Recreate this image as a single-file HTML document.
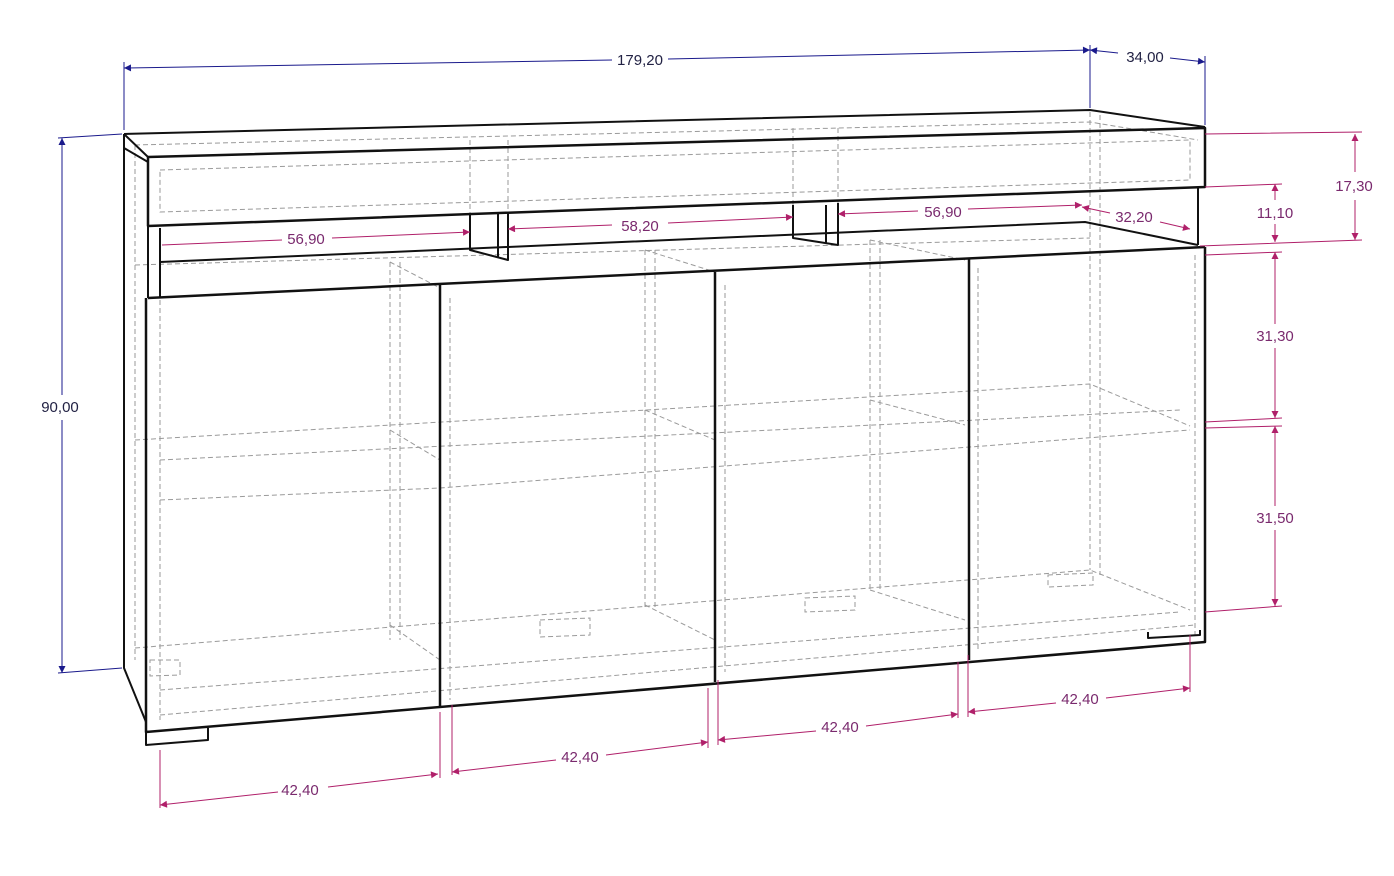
<!DOCTYPE html>
<html><head><meta charset="utf-8"><style>
html,body{margin:0;padding:0;background:#fff;}
svg{display:block}
text{font-family:"Liberation Sans",sans-serif;font-size:15px;}
.m{fill:#7a2a6e}.b{fill:#222244}
</style></head><body>
<svg width="1394" height="876" viewBox="0 0 1394 876" xmlns="http://www.w3.org/2000/svg">
<defs>
<marker id="am" viewBox="0 0 10 10" refX="10" refY="5" markerWidth="9" markerHeight="7" orient="auto-start-reverse" markerUnits="userSpaceOnUse"><path d="M0,0L10,5L0,10z" fill="#b0206a"/></marker>
<marker id="ab" viewBox="0 0 10 10" refX="10" refY="5" markerWidth="9" markerHeight="7" orient="auto-start-reverse" markerUnits="userSpaceOnUse"><path d="M0,0L10,5L0,10z" fill="#1a1a8c"/></marker>
</defs>
<g stroke="#9a9a9a" stroke-width="1" stroke-dasharray="5,3" fill="none">
<path d="M135,145 L1090,122 L1198,140"/>
<path d="M160,170 L1190,140 L1190,180 L160,212z"/>
<path d="M135,265 L1090,238"/>
<path d="M135,440 L1090,384 L1190,426"/>
<path d="M160,500 L440,488 L1190,430"/>
<path d="M160,460 L1180,410"/>
<path d="M135,648 L1090,570 L1190,610"/>
<path d="M160,715 L1195,625"/>
<path d="M160,690 L1180,612"/>
<path d="M135,145 L135,660 M160,300 L160,720"/>
<path d="M1090,112 L1090,570 M1100,115 L1100,575"/>
<path d="M390,262 L390,640 M400,262 L400,640 M390,262 L440,288"/>
<path d="M645,250 L645,610 M655,250 L655,610 M645,250 L715,272"/>
<path d="M870,240 L870,590 M880,240 L880,590 M870,240 L965,260"/>
<path d="M390,430 L440,460 M645,410 L715,440 M870,400 L965,425"/>
<path d="M390,625 L440,660 M645,605 L715,640 M870,590 L965,620"/>
<path d="M470,140 L470,215 M508,140 L508,215 M793,128 L793,205 M838,128 L838,205"/>
<path d="M450,298 L450,700 M725,285 L725,672 M978,268 L978,650 M1195,255 L1195,635"/>
<path d="M540,620 L590,618 L590,635 L540,637z M805,598 L855,596 L855,610 L805,612z M1048,575 L1093,573 L1093,585 L1048,587z M150,660 L180,660 L180,675 L150,676z"/>
</g>
<g stroke="#111" stroke-width="2" fill="none" stroke-linejoin="round">
<path d="M124,134 L1090,110 L1205,127"/>
<path d="M148,157 L1205,128 L1205,187 L148,226z" stroke-width="2.5"/>
<path d="M124,134 L148,157 M124,148 L148,162"/>
<path d="M124,134 L124,668 L146,722"/>
<path d="M148,226 L148,298 M160,228 L160,298"/>
<path d="M160,262 L1085,222 L1198,245"/>
<path d="M1198,187 L1198,245"/>
<path d="M470,215 L470,250 L508,260 L508,212 M498,258 L498,214"/>
<path d="M793,205 L793,238 L838,245 L838,203 M826,244 L826,205"/>
<path d="M148,298 L1205,247" stroke-width="2.5"/>
<path d="M146,298 L146,732 L1205,642 L1205,247" stroke-width="2.5"/>
<path d="M440,285 L440,707 M715,272 L715,682 M969,259 L969,660" stroke-width="2.5"/>
<path d="M146,732 L146,745 L208,740 L208,728 M1148,632 L1148,638 L1200,635 L1200,630"/>
<path d="M124,648 L124,668"/>
</g>
<g stroke="#1a1a8c" stroke-width="1" fill="none">
<path d="M124,62 L124,130 M1090,45 L1090,108 M1205,56 L1205,125"/>
<path d="M124,68 L612,60" marker-start="url(#ab)"/>
<path d="M668,59 L1090,50" marker-end="url(#ab)"/>
<path d="M1090,50 L1118,53" marker-start="url(#ab)"/>
<path d="M1170,58 L1205,62" marker-end="url(#ab)"/>
<path d="M58,138 L122,134 M58,673 L122,668"/>
<path d="M62,138 L62,395" marker-start="url(#ab)"/>
<path d="M62,420 L62,673" marker-end="url(#ab)"/>
</g>
<text x="640" y="65" text-anchor="middle" class="b">179,20</text>
<text x="1145" y="62" text-anchor="middle" class="b">34,00</text>
<text x="60" y="412" text-anchor="middle" class="b">90,00</text>
<g stroke="#b0206a" stroke-width="1" fill="none">
<path d="M162,245 L282,240" /><path d="M332,238 L470,232" marker-end="url(#am)"/>
<path d="M508,229 L612,225" marker-start="url(#am)"/>
<path d="M668,223 L793,217" marker-end="url(#am)"/>
<path d="M838,214 L918,211" marker-start="url(#am)"/>
<path d="M968,209 L1082,205" marker-end="url(#am)"/>
<path d="M1082,207 L1110,213" marker-start="url(#am)"/>
<path d="M1160,222 L1190,229" marker-end="url(#am)"/>
<path d="M1205,134 L1362,132 M1205,187 L1282,184 M1200,246 L1362,240 M1205,255 L1282,252 M1205,422 L1282,418 M1205,428 L1282,426 M1205,612 L1282,606"/>
<path d="M1355,134 L1355,172" marker-start="url(#am)"/><path d="M1355,200 L1355,240" marker-end="url(#am)"/>
<path d="M1275,184 L1275,200" marker-start="url(#am)"/><path d="M1275,224 L1275,242" marker-end="url(#am)"/>
<path d="M1275,252 L1275,324" marker-start="url(#am)"/><path d="M1275,348 L1275,418" marker-end="url(#am)"/>
<path d="M1275,426 L1275,506" marker-start="url(#am)"/><path d="M1275,530 L1275,606" marker-end="url(#am)"/>
<path d="M160,750 L160,808 M440,712 L440,778 M452,705 L452,775 M708,688 L708,748 M718,680 L718,745 M958,662 L958,718 M968,655 L968,717 M1190,635 L1190,692"/>
<path d="M160,805 L278,792" marker-start="url(#am)"/><path d="M328,787 L438,774" marker-end="url(#am)"/>
<path d="M452,772 L556,760" marker-start="url(#am)"/><path d="M606,755 L708,742" marker-end="url(#am)"/>
<path d="M718,740 L816,731" marker-start="url(#am)"/><path d="M866,726 L958,714" marker-end="url(#am)"/>
<path d="M968,712 L1056,703" marker-start="url(#am)"/><path d="M1106,698 L1190,688" marker-end="url(#am)"/>
</g>
<g class="m">
<text x="306" y="244" text-anchor="middle">56,90</text>
<text x="640" y="231" text-anchor="middle">58,20</text>
<text x="943" y="217" text-anchor="middle">56,90</text>
<text x="1134" y="222" text-anchor="middle">32,20</text>
<text x="1354" y="191" text-anchor="middle">17,30</text>
<text x="1275" y="218" text-anchor="middle">11,10</text>
<text x="1275" y="341" text-anchor="middle">31,30</text>
<text x="1275" y="523" text-anchor="middle">31,50</text>
<text x="300" y="795" text-anchor="middle">42,40</text>
<text x="580" y="762" text-anchor="middle">42,40</text>
<text x="840" y="732" text-anchor="middle">42,40</text>
<text x="1080" y="704" text-anchor="middle">42,40</text>
</g>
</svg>
</body></html>
